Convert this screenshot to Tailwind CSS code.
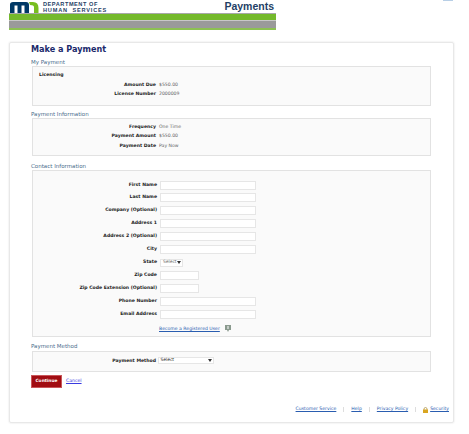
<!DOCTYPE html>
<html lang="en">
<head>
    <meta charset="UTF-8">
    <title>Payments</title>
    <script src="https://cdn.jsdelivr.net/npm/@tailwindcss/browser@4"></script>
</head>
<body class="bg-white w-[469px] h-[434px] overflow-hidden relative font-['DejaVu_Sans',sans-serif] text-[4.6px] text-[#222]">
    <!-- Header banner -->
    <header class="ml-[9px] w-[267px] h-[30px] flex flex-col">
        <div class="h-[13px] flex items-center relative">
            <svg class="ml-px w-[29px] h-[13px]" viewBox="0 0 29 13">
                <path d="M0 13V4.5Q0 2 3 2H16Q19 2 19 5V13H14.5V5.5H11.5V13H7.5V5.5H4.5V13Z" fill="#003865"/>
                <path d="M19 2H23Q28.500 2 28.500 8V13H24V7Q24 5 20 5Z" fill="#78be20"/>
            </svg>
            <div class="ml-[4px] font-['Liberation_Sans',sans-serif] font-bold text-[5.6px] leading-[6px] tracking-[0.55px] text-[#1f3f66]">
                <div>DEPARTMENT OF</div>
                <div class="tracking-[0.8px]">HUMAN&nbsp; SERVICES</div>
            </div>
            <div class="ml-auto mr-[2px] font-['Liberation_Sans',sans-serif] font-bold text-[10.5px] text-[#1f3f66]">Payments</div>
        </div>
        <div class="h-px bg-[#a8a8a8]"></div>
        <div class="h-[6px] bg-[#74b92b]"></div>
        <div class="h-px bg-[#c8c8c8]"></div>
        <div class="h-[7px] bg-[#9a9a9a]"></div>
        <div class="h-[2px] bg-[#8cc152]"></div>
    </header>
    <div class="absolute top-0 left-[443px] w-[10px] h-px bg-[#b8cfe6]"></div>

    <!-- Main card -->
    <main class="mt-[12px] ml-[9px] w-[445px] h-[381px] rounded-[2px] border border-[#e8e8e8] shadow-[0_0_2px_#ddd] relative pl-[21px]">
        <h1 class="mt-px font-bold text-[8.1px] leading-[11px] text-[#1b2a6b]">Make a Payment</h1>

        <h2 class="mt-[3px] text-[5.5px] leading-[8px] font-normal text-[#4a6d8c]">My Payment</h2>
        <section class="w-[399px] h-[40px] border-[1.5px] border-[#e2e2e2] bg-[#fafafa] ml-px">
            <div class="pl-[6px] pt-[4px] font-bold leading-[8px]">Licensing</div>
            <div class="mt-[2px] flex flex-col gap-[1.7px]">
                <div class="flex h-[8px] items-center"><b class="w-[123px] text-right">Amount Due</b><span class="ml-[3px] text-[#666]">$550.00</span></div>
                <div class="flex h-[8px] items-center"><b class="w-[123px] text-right">License Number</b><span class="ml-[3px] text-[#666]">2000009</span></div>
            </div>
        </section>

        <h2 class="mt-[4px] text-[5.5px] leading-[8px] font-normal text-[#4a6d8c]">Payment Information</h2>
        <section class="w-[399px] h-[38px] border-[1.5px] border-[#e2e2e2] bg-[#fafafa] ml-px pt-[4px] flex flex-col gap-[1.7px]">
            <div class="flex h-[8px] items-center"><b class="w-[123px] text-right">Frequency</b><span class="ml-[3px] text-[#666]">One Time</span></div>
            <div class="flex h-[8px] items-center"><b class="w-[123px] text-right">Payment Amount</b><span class="ml-[3px] text-[#666]">$550.00</span></div>
            <div class="flex h-[8px] items-center"><b class="w-[123px] text-right">Payment Date</b><span class="ml-[3px] text-[#666]">Pay Now</span></div>
        </section>

        <h2 class="mt-[5.5px] text-[5.5px] leading-[8px] font-normal text-[#4a6d8c]">Contact Information</h2>
        <section class="mt-[0.5px] w-[399px] h-[167px] border-[1.5px] border-[#e2e2e2] bg-[#fafafa] ml-px pt-[9.5px] flex flex-col gap-[3.95px]">
            <div class="flex h-[9px] items-center"><b class="w-[124px] text-right">First Name</b><span class="ml-[3px] w-[96px] h-[9px] bg-white border border-[#e6e6e6]"></span></div>
            <div class="flex h-[9px] items-center"><b class="w-[124px] text-right">Last Name</b><span class="ml-[3px] w-[96px] h-[9px] bg-white border border-[#e6e6e6]"></span></div>
            <div class="flex h-[9px] items-center"><b class="w-[124px] text-right">Company (Optional)</b><span class="ml-[3px] w-[96px] h-[9px] bg-white border border-[#e6e6e6]"></span></div>
            <div class="flex h-[9px] items-center"><b class="w-[124px] text-right">Address 1</b><span class="ml-[3px] w-[96px] h-[9px] bg-white border border-[#e6e6e6]"></span></div>
            <div class="flex h-[9px] items-center"><b class="w-[124px] text-right">Address 2 (Optional)</b><span class="ml-[3px] w-[96px] h-[9px] bg-white border border-[#e6e6e6]"></span></div>
            <div class="flex h-[9px] items-center"><b class="w-[124px] text-right">City</b><span class="ml-[3px] w-[96px] h-[9px] bg-white border border-[#e6e6e6]"></span></div>
            <div class="flex h-[9px] items-center"><b class="w-[124px] text-right">State</b><span class="ml-[3px] w-[23px] h-[8px] bg-white border border-[#e6e6e6] flex items-center justify-between pl-[2px] pr-[1px] text-[#666] text-[4.4px]">Select<svg class="w-[4px] h-[3px]" viewBox="0 0 4 3"><path d="M0 0H4L2 3Z" fill="#333"/></svg></span></div>
            <div class="flex h-[9px] items-center"><b class="w-[124px] text-right">Zip Code</b><span class="ml-[3px] w-[39px] h-[9px] bg-white border border-[#e6e6e6]"></span></div>
            <div class="flex h-[9px] items-center"><b class="w-[124px] text-right">Zip Code Extension (Optional)</b><span class="ml-[3px] w-[39px] h-[9px] bg-white border border-[#e6e6e6]"></span></div>
            <div class="flex h-[9px] items-center"><b class="w-[124px] text-right">Phone Number</b><span class="ml-[3px] w-[96px] h-[9px] bg-white border border-[#e6e6e6]"></span></div>
            <div class="flex h-[9px] items-center"><b class="w-[124px] text-right">Email Address</b><span class="ml-[3px] w-[96px] h-[9px] bg-white border border-[#e6e6e6]"></span></div>
            <div class="flex items-center mt-[3px] pl-[126px]">
                <a class="underline text-[#2a5db0]" href="#">Become a Registered User</a>
                <svg class="ml-[5px] w-[6px] h-[7px] -mt-[2px]" viewBox="0 0 6 7"><path d="M0 0H6V5H4L3 7L2 5H0Z" fill="#8a9a8e"/><rect x="2.500" y="1" width="1" height="3" fill="#fff"/></svg>
            </div>
        </section>

        <h2 class="mt-[5px] text-[5.5px] leading-[8px] font-normal text-[#4a6d8c]">Payment Method</h2>
        <section class="mt-px w-[399px] h-[21px] border-[1.5px] border-[#e2e2e2] bg-[#fafafa] ml-px pt-[4.5px] flex items-start">
            <b class="w-[123px] h-[8px] leading-[8px] text-right">Payment Method</b>
            <span class="ml-[1.5px] w-[56px] h-[7px] bg-white border border-[#e6e6e6] flex items-center justify-between pl-[2px] pr-[1px] text-[4.4px]">Select<svg class="w-[4px] h-[3px]" viewBox="0 0 4 3"><path d="M0 0H4L2 3Z" fill="#333"/></svg></span>
        </section>

        <div class="mt-[3px] flex items-center">
            <button class="w-[31px] h-[13px] bg-[#a10d12] border border-[#c9565a] text-white font-bold text-[4.4px]">Continue</button>
            <a class="ml-[4px] underline text-[#3a3ae0]" href="#">Cancel</a>
        </div>

        <!-- Footer links -->
        <nav class="absolute right-[4px] bottom-[9px] flex items-center text-[#2a5db0]">
            <a class="underline" href="#">Customer Service</a>
            <span class="mx-[7px] w-px h-[5px] bg-[#ddd]"></span>
            <a class="underline" href="#">Help</a>
            <span class="mx-[7px] w-px h-[5px] bg-[#ddd]"></span>
            <a class="underline" href="#">Privacy Policy</a>
            <span class="mx-[7px] w-px h-[5px] bg-[#ddd]"></span>
            <svg class="mr-[2px] w-[5px] h-[6px]" viewBox="0 0 5 6"><path d="M1 3V2Q1 .5 2.500 .5T4 2V3" fill="none" stroke="#a98a3a" stroke-width=".7"/><rect y="2.500" width="5" height="3.500" fill="#d9a520"/></svg>
            <a class="underline" href="#">Security</a>
        </nav>
    </main>
</body>
</html>
